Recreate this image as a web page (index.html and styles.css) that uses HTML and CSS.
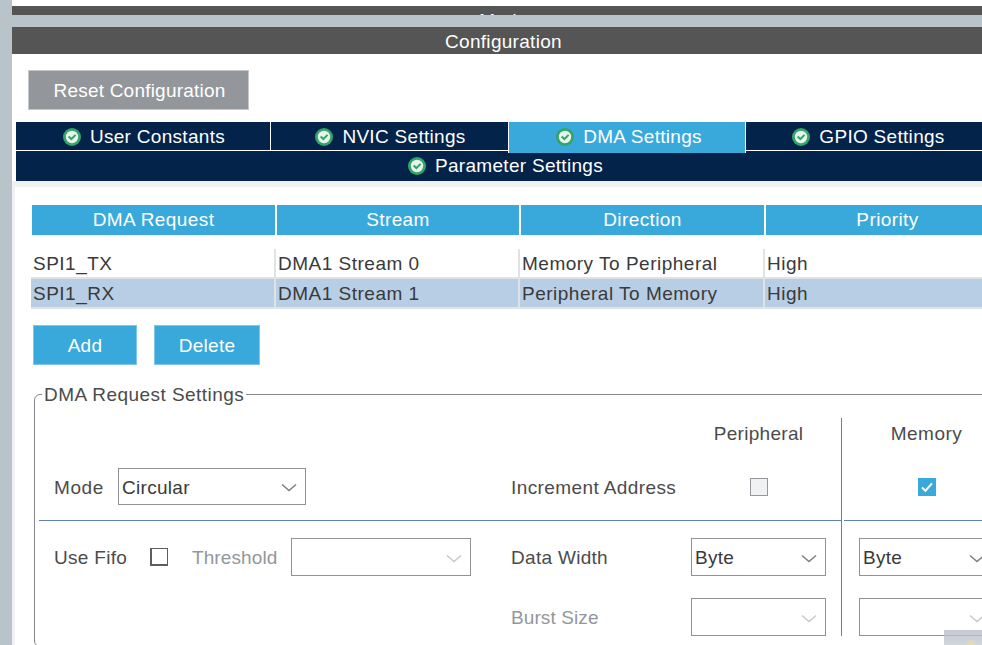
FILE: index.html
```html
<!DOCTYPE html>
<html lang="en">

<head>
    <meta charset="UTF-8">
    <meta name="viewport" content="width=device-width, initial-scale=1.0">
    <title>DMA Settings</title>
    <link rel="stylesheet" href="styles.css">
</head>

<body>
    <svg class="defs" width="0" height="0">
        <symbol id="ok" viewBox="0 0 18 18">
            <circle cx="9" cy="9" r="9" fill="#35a468"/>
            <circle cx="9" cy="9" r="6.2" fill="#e6f4ec"/>
            <path d="M5.6 8.4 8.4 11 12.6 6.9" fill="none" stroke="#35a468" stroke-width="2"/>
        </symbol>
        <symbol id="chevron" viewBox="0 0 16 9">
            <path d="M1 1.5 8 7.5 15 1.5" fill="none" stroke="currentColor" stroke-width="1.5"/>
        </symbol>
    </svg>

    <div class="window">
        <div class="mode-bar">Mode</div>
        <div class="strip"></div>
        <div class="title-bar">Configuration</div>

        <div class="reset-row">
            <button class="reset-btn">Reset Configuration</button>
        </div>

        <div class="tabs">
            <div class="tab"><svg class="ok-icon"><use href="#ok"/></svg>User Constants</div>
            <div class="tab"><svg class="ok-icon"><use href="#ok"/></svg>NVIC Settings</div>
            <div class="tab active"><svg class="ok-icon"><use href="#ok"/></svg>DMA Settings</div>
            <div class="tab gpio"><svg class="ok-icon"><use href="#ok"/></svg>GPIO Settings</div>
            <div class="tab wide"><svg class="ok-icon"><use href="#ok"/></svg>Parameter Settings</div>
        </div>

        <div class="panel">
            <div class="table-head">
                <div>DMA Request</div>
                <div>Stream</div>
                <div>Direction</div>
                <div>Priority</div>
            </div>
            <div class="table-row">
                <div>SPI1_TX</div>
                <div>DMA1 Stream 0</div>
                <div>Memory To Peripheral</div>
                <div>High</div>
            </div>
            <div class="table-row selected">
                <div>SPI1_RX</div>
                <div>DMA1 Stream 1</div>
                <div>Peripheral To Memory</div>
                <div>High</div>
            </div>

            <div class="actions">
                <button class="action-btn add">Add</button>
                <button class="action-btn delete">Delete</button>
            </div>

            <fieldset class="settings">
                <legend>DMA Request Settings</legend>
                <div class="settings-grid">
                    <div class="col-title peripheral-title">Peripheral</div>
                    <div class="col-title memory">Memory</div>

                    <div class="cell mode-cell">
                        <span class="mode-label">Mode</span>
                        <div class="combo mode-combo">Circular<svg class="chevron"><use href="#chevron"/></svg></div>
                    </div>
                    <div class="cell increment">Increment Address</div>
                    <div class="cell center"><span class="check off"></span></div>
                    <div class="cell center memory">
                        <span class="check on">
                            <svg viewBox="0 0 18 18" width="18" height="18"><path d="M4 9.5 7.4 12.8 14 5.4" fill="none" stroke="#fff" stroke-width="2"/></svg>
                        </span>
                    </div>

                    <div class="rule"></div>
                    <div class="rule-memory memory"></div>

                    <div class="fifo-cell">
                        <span class="fifo-label">Use Fifo</span>
                        <span class="check plain"></span>
                        <span class="threshold-label">Threshold</span>
                        <div class="combo threshold-combo"><svg class="chevron faint"><use href="#chevron"/></svg></div>
                    </div>
                    <div class="cell top">Data Width</div>
                    <div class="top"><div class="combo">Byte<svg class="chevron"><use href="#chevron"/></svg></div></div>
                    <div class="top memory select-cell"><div class="combo">Byte<svg class="chevron"><use href="#chevron"/></svg></div></div>

                    <div class="cell muted">Burst Size</div>
                    <div><div class="combo"><svg class="chevron faint"><use href="#chevron"/></svg></div></div>
                    <div class="memory select-cell"><div class="combo"><svg class="chevron faint"><use href="#chevron"/></svg></div></div>
                </div>
            </fieldset>
        </div>

        <div class="corner-btn"></div>
    </div>
</body>

</html>
```

FILE: styles.css
```css
html, body {
    margin: 0;
    height: 645px;
    overflow: hidden;
    background-color: #b8c4ca;
}

body {
    font-family: "Liberation Sans", Arial, sans-serif;
    font-size: 19px;
    letter-spacing: 0.3px;
    color: #4b4b4b;
}

.defs {
    display: block;
}

.window {
    position: relative;
    width: 983px;
    height: 645px;
    margin-left: 12px;
    padding-top: 6px;
    box-sizing: border-box;
    overflow: hidden;
    background-color: #fff;
}

.mode-bar {
    height: 9px;
    line-height: 29px;
    overflow: hidden;
    text-align: center;
    color: #fff;
    background-color: #545554;
}

.strip {
    height: 12px;
    background-color: #b8c4ca;
}

.title-bar {
    height: 27px;
    line-height: 29px;
    text-align: center;
    color: #fff;
    background-color: #545554;
}

.reset-row {
    padding: 16px 0 12px 16px;
}

button {
    font: inherit;
    letter-spacing: inherit;
    color: #fff;
    cursor: pointer;
}

.reset-btn {
    display: block;
    width: 221px;
    height: 40px;
    padding: 2px 0 0 2px;
    border: 1px solid #c4c8cb;
    letter-spacing: 0.22px;
    background-color: #93979b;
}

.tabs {
    display: grid;
    grid-template-columns: 255px 238px 237px 1fr;
    margin-left: 4px;
    color: #fff;
    background-color: #03234b;
}

.tab {
    display: flex;
    align-items: center;
    justify-content: center;
    height: 26px;
    padding: 2px 0 0 2px;
    border-right: 1px solid #fff;
    border-bottom: 1px solid #fff;
}

.tab.gpio {
    padding: 2px 4px 0 0;
    border-right: none;
}

.tab.active {
    z-index: 1;
    padding: 2px 0 3px 4px;
    margin-bottom: -3px;
    margin-left: -1px;
    border-left: 1px solid #fff;
    border-bottom: none;
    background-color: #39a9dc;
}

.tab.wide {
    grid-column: 1 / -1;
    height: 30px;
    padding: 0;
    border: none;
}

.ok-icon {
    width: 18px;
    height: 18px;
    margin-right: 9px;
}

.panel {
    padding: 18px 0 0 17px;
    border-top: 6px solid #eff1f3;
    border-left: 3px solid #eff1f3;
}

.table-head {
    display: grid;
    grid-template-columns: 243px 242px 243px 243px;
    gap: 2px;
    width: 980px;
    height: 28px;
    line-height: 30px;
    text-align: center;
    letter-spacing: 0.4px;
    color: #fff;
}

.table-head div {
    background-color: #39a9dc;
}

.table-row {
    display: grid;
    grid-template-columns: 245px 244px 245px 245px;
    width: 980px;
    height: 28px;
    margin-left: -1px;
    line-height: 30px;
    letter-spacing: 0.5px;
    color: #3a3a3a;
    border-bottom: 2px solid #e0e3e6;
}

.table-head + .table-row {
    margin-top: 16px;
}

.table-row div {
    padding-left: 2px;
    border-right: 2px solid #e0e3e6;
}

.table-row.selected {
    background-color: #b8cee4;
}

.actions {
    display: flex;
    gap: 17px;
    padding: 16px 0 0 1px;
}

.action-btn {
    height: 40px;
    padding: 2px 0 0;
    border: 1px solid #7fc6e8;
    background-color: #39a9dc;
}

.action-btn.add {
    width: 104px;
}

.action-btn.delete {
    width: 106px;
}

.settings {
    width: 990px;
    height: 262px;
    margin: 18px 0 0 2px;
    padding: 0 0 0 4px;
    border: 1px solid #85898d;
    border-radius: 6px;
}

.settings legend {
    margin-left: 3px;
    padding: 2px 2px 0;
    line-height: 20px;
    letter-spacing: 0.45px;
}

.settings-grid {
    display: grid;
    grid-template-columns: 472px 180px 150px 172px;
    grid-template-rows: 50px 52px 1px 77px 38px;
    padding-top: 13px;
}

.col-title {
    line-height: 32px;
    text-align: center;
}

.peripheral-title {
    grid-column: 3;
    padding-right: 15px;
}

.memory {
    grid-column: 4;
    border-left: 1px solid #5f7fb5;
}

.col-title.memory {
    padding-right: 2px;
    letter-spacing: 0.5px;
}

.cell {
    display: flex;
    align-items: center;
    height: 35px;
    padding-top: 2px;
}

.cell .check {
    margin-top: -2px;
}

.cell.increment {
    letter-spacing: 0.4px;
}

.cell.center {
    justify-content: center;
    padding-right: 15px;
}

.cell.memory {
    padding-right: 2px;
    padding-bottom: 15px;
}

.cell.top {
    height: 36px;
    margin-top: 17px;
}

.cell.muted {
    grid-column: 2;
    height: 36px;
    letter-spacing: 0.1px;
    color: #93979b;
}

.cell.mode-cell {
    height: 37px;
    padding: 0 0 0 15px;
}

.mode-label {
    width: 64px;
    padding-top: 2px;
    letter-spacing: 0.6px;
}

.combo {
    display: flex;
    align-items: center;
    box-sizing: border-box;
    width: 135px;
    height: 38px;
    padding: 2px 8px 0 3px;
    border: 1px solid #8f9398;
    color: #3a3a3a;
}

.mode-combo {
    width: 188px;
    height: 37px;
}

.threshold-combo {
    width: 180px;
}

.chevron {
    width: 16px;
    height: 9px;
    color: #7b7f83;
    margin-left: auto;
}

.chevron.faint {
    color: #c6c9cc;
}

.check {
    display: block;
    box-sizing: border-box;
    width: 18px;
    height: 18px;
    flex: none;
}

.check.off {
    border: 1px solid #93979b;
    background-color: #eff1f3;
}

.check.on {
    background-color: #39a9dc;
}

.check.on svg {
    display: block;
}

.check.plain {
    border: 2px solid #5c5f62;
    border-width: 1px 1px 2px 2px;
}

.rule {
    grid-column: 1 / 4;
    height: 1px;
    background-color: #5f7fb5;
}

.rule-memory {
    background-image: linear-gradient(#5f7fb5, #5f7fb5);
    background-position: 2px 0;
    background-repeat: no-repeat;
}

.fifo-cell {
    display: flex;
    align-items: flex-start;
    padding: 17px 0 0 15px;
}

.fifo-label {
    width: 96px;
    line-height: 40px;
}

.fifo-cell .check {
    margin-top: 10px;
}

.threshold-label {
    width: 99px;
    margin-left: 24px;
    line-height: 40px;
    letter-spacing: 0.1px;
    color: #93979b;
}

.top {
    padding-top: 17px;
}

.cell.top {
    padding-top: 2px;
}

.select-cell {
    padding-left: 17px;
}

.corner-btn {
    position: absolute;
    left: 932px;
    top: 630px;
    width: 60px;
    height: 20px;
    background:
        radial-gradient(circle at 27px 15px, rgba(232, 220, 170, 0.9) 0 2px, transparent 6px),
        linear-gradient(rgba(178, 184, 196, 0.75), rgba(206, 211, 219, 0.85));
}
```
